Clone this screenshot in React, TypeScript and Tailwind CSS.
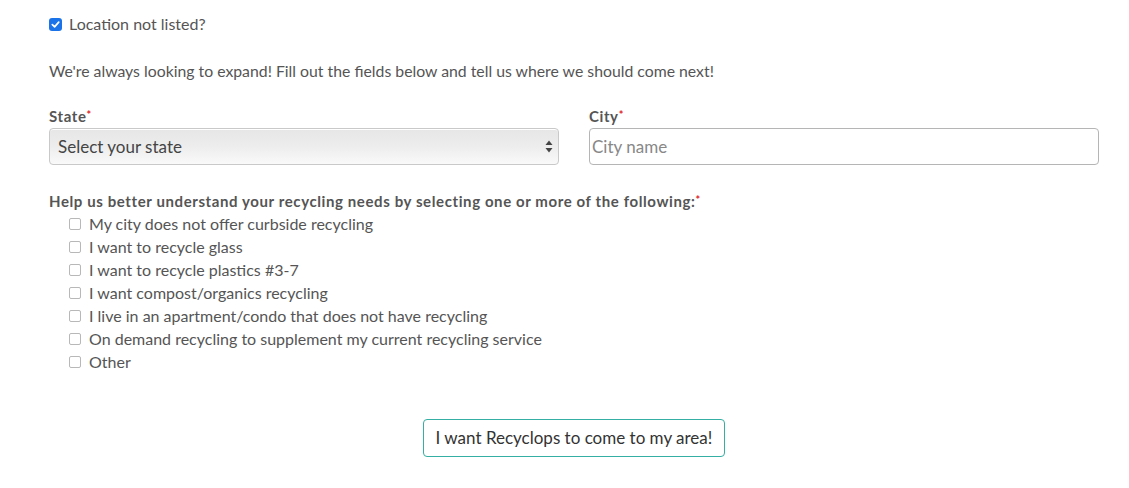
import React from 'react';

const needs = [
  'My city does not offer curbside recycling',
  'I want to recycle glass',
  'I want to recycle plastics #3-7',
  'I want compost/organics recycling',
  'I live in an apartment/condo that does not have recycling',
  'On demand recycling to supplement my current recycling service',
  'Other',
];

const Box = () => (
  <span className="inline-block w-[12px] h-[12px] rounded-[2px] border border-[#b8b8b8] bg-white shrink-0" />
);

const Req = () => <span className="text-[#e0242b] text-[11px] align-top relative -top-[1px]">*</span>;

export default function App() {
  return (
    <div className="w-[1129px] h-[488px] bg-white text-[#555] font-['Lato','Open_Sans',sans-serif] text-[16px]">
      <div className="w-[1050px] ml-[49px] pt-[15px]">
        <label className="flex items-center gap-[7px] h-[18px]">
          <span className="w-[13px] h-[13px] rounded-[3px] bg-[#1a73e8] flex items-center justify-center">
            <svg width="9" height="9" viewBox="0 0 10 10">
              <path d="M1.5 5.2 L4 7.6 L8.6 2.4" fill="none" stroke="white" strokeWidth="1.9" strokeLinecap="round" strokeLinejoin="round" />
            </svg>
          </span>
          <span className="text-[#555]">Location not listed?</span>
        </label>

        <p className="mt-[29px] leading-[18px] text-[15.8px]">
          We're always looking to expand! Fill out the fields below and tell us where we should come next!
        </p>

        <div className="grid grid-cols-2 gap-[30px] mt-[28px]">
          <div>
            <div className="font-bold text-[15px] tracking-[0.6px] leading-[16px] text-[#555]">
              State<Req />
            </div>
            <div className="relative mt-[4px]">
              <div className="h-[37px] rounded-[4px] border border-[#c9c9c9] bg-gradient-to-b from-[#e6e6e6] via-[#ededed] to-[#f9f9f9] shadow-[inset_0_1px_0_#fff] flex items-center px-[8px] text-[17px] text-[#444]">
                Select your state
              </div>
              <svg className="absolute right-[6px] top-[12px]" width="8" height="13" viewBox="0 0 8 13">
                <path d="M4 0.5 L7.5 5 L0.5 5 Z" fill="#444" />
                <path d="M4 12.5 L7.5 8 L0.5 8 Z" fill="#444" />
              </svg>
            </div>
          </div>
          <div>
            <div className="font-bold text-[15px] tracking-[0.6px] leading-[16px] text-[#555]">
              City<Req />
            </div>
            <input
              className="mt-[4px] w-full h-[37px] rounded-[4px] border border-[#b5b5b5] px-[2px] text-[17px] text-[#444] placeholder:text-[#888] outline-none"
              placeholder="City name"
            />
          </div>
        </div>

        <div className="mt-[28px] font-bold text-[15px] tracking-[0.6px] leading-[16px] text-[#555]">
          Help us better understand your recycling needs by selecting one or more of the following:<Req />
        </div>
        <ul className="mt-[3px] ml-[20px]">
          {needs.map((n) => (
            <li key={n} className="flex items-center gap-[8px] h-[23px]">
              <Box />
              <span>{n}</span>
            </li>
          ))}
        </ul>

        <div className="flex justify-center mt-[46px]">
          <button className="h-[38px] px-[12px] rounded-[4px] border border-[#35aea3] bg-white text-[17px] text-[#333]">
            I want Recyclops to come to my area!
          </button>
        </div>
      </div>
    </div>
  );
}
